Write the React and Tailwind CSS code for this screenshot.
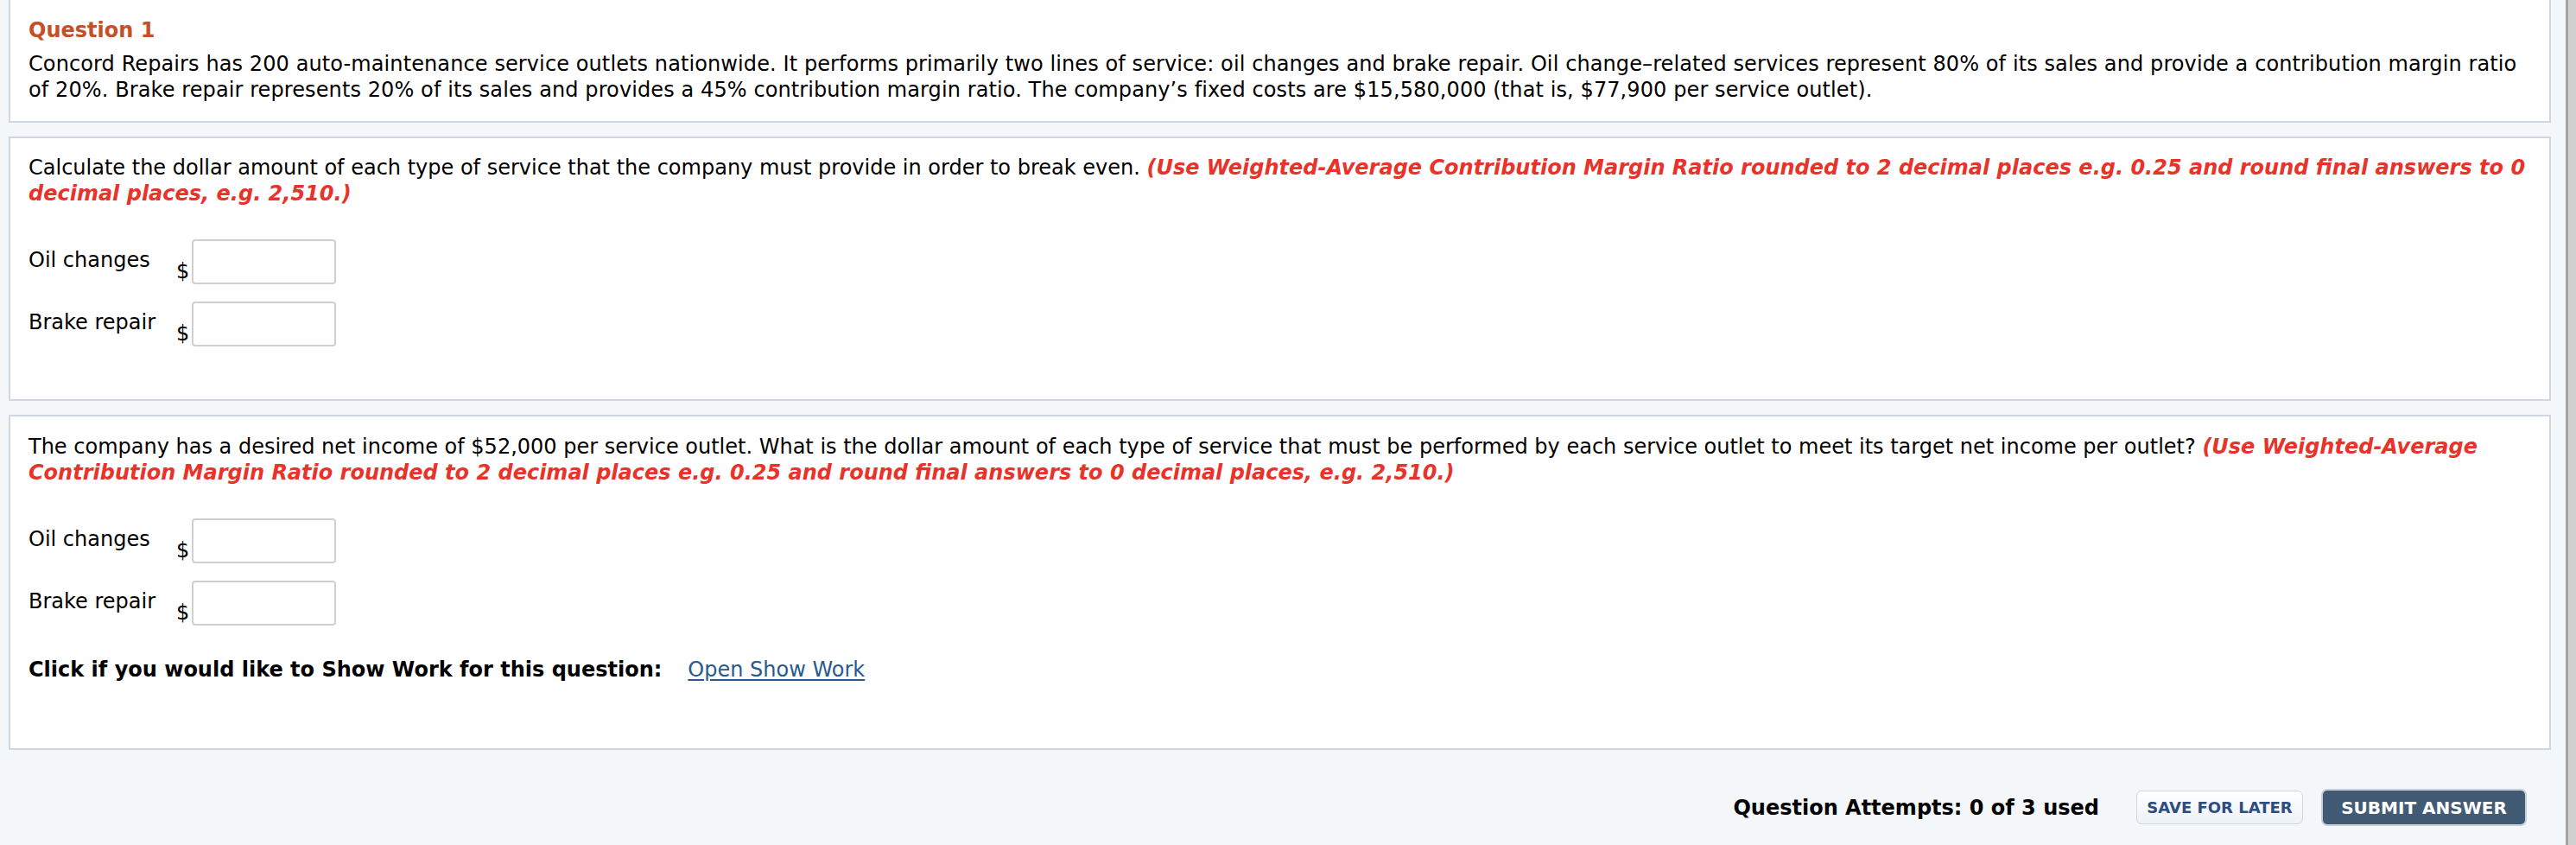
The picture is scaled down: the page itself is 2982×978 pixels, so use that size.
import React from 'react';

const Red = ({ children }) => (
  <span className="font-bold italic text-[#e8332a]">{children}</span>
);

const AmountRow = ({ label }) => (
  <div className="flex items-start">
    <div className="w-[171px] pt-[9px]">{label}</div>
    <div className="flex items-end">
      <span className="leading-[30px] mr-[3px]">$</span>
      <input
        type="text"
        className="w-[167px] h-[52px] border-2 border-[#cfcfcf] rounded-[4px] bg-white outline-none"
      />
    </div>
  </div>
);

const Panel = ({ className = '', children }) => (
  <section className={`bg-white border-2 border-[#ced7e1] px-[21px] ${className}`}>
    {children}
  </section>
);

export default function App() {
  return (
    <div className="flex min-h-[978px] bg-[#f4f7fa] text-[24px] leading-[30px] text-black font-['DejaVu_Sans',Verdana,sans-serif]">
      <main className="flex-1 pl-[10px] pr-[17px]">
        <Panel className="border-t-0 pt-[20px] pb-[21px]">
          <h2 className="font-bold text-[#c54f27]">Question 1</h2>
          <p className="mt-[9px] tracking-[0.1px]">
            Concord Repairs has 200 auto-maintenance service outlets nationwide. It performs primarily two lines of service: oil changes and brake repair. Oil change–related services represent 80% of its sales and provide a contribution margin ratio of 20%. Brake repair represents 20% of its sales and provides a 45% contribution margin ratio. The company’s fixed costs are $15,580,000 (that is, $77,900 per service outlet).
          </p>
        </Panel>

        <Panel className="mt-[16px] pt-[19px] pb-[61px]">
          <p>
            Calculate the dollar amount of each type of service that the company must provide in order to break even.{' '}
            <Red>(Use Weighted-Average Contribution Margin Ratio rounded to 2 decimal places e.g. 0.25 and round final answers to 0 decimal places, e.g. 2,510.)</Red>
          </p>
          <div className="mt-[38px] flex flex-col gap-[20px]">
            <AmountRow label="Oil changes" />
            <AmountRow label="Brake repair" />
          </div>
        </Panel>

        <Panel className="mt-[16px] pt-[20px] pb-[76px]">
          <p>
            The company has a desired net income of $52,000 per service outlet. What is the dollar amount of each type of service that must be performed by each service outlet to meet its target net income per outlet?{' '}
            <Red>(Use Weighted-Average Contribution Margin Ratio rounded to 2 decimal places e.g. 0.25 and round final answers to 0 decimal places, e.g. 2,510.)</Red>
          </p>
          <div className="mt-[38px] flex flex-col gap-[20px]">
            <AmountRow label="Oil changes" />
            <AmountRow label="Brake repair" />
          </div>
          <div className="mt-[36px] flex">
            <span className="font-bold">Click if you would like to Show Work for this question:</span>
            <a href="#" className="ml-[30px] text-[#2a5a8c] underline underline-offset-[3px]">Open Show Work</a>
          </div>
        </Panel>

        <div className="mt-[47px] flex items-center justify-end pr-[30px]">
          <span className="font-bold text-[24px]">Question Attempts: 0 of 3 used</span>
          <button className="ml-[43px] h-[39px] w-[193px] rounded-[6px] border border-[#cfd7e0] bg-gradient-to-b from-white to-[#eef1f5] text-[18px] font-bold uppercase text-[#2b4d7f]">
            Save for later
          </button>
          <button className="ml-[23px] h-[39px] w-[234px] rounded-[5px] bg-[#425b75] text-[20px] font-bold uppercase text-white shadow-[0_0_0_2px_#c7cfd9]">
            Submit answer
          </button>
        </div>
      </main>
      <div className="w-[12px] border-l-[3px] border-[#a3a3a3] bg-[#d0d0d0]" />
    </div>
  );
}
